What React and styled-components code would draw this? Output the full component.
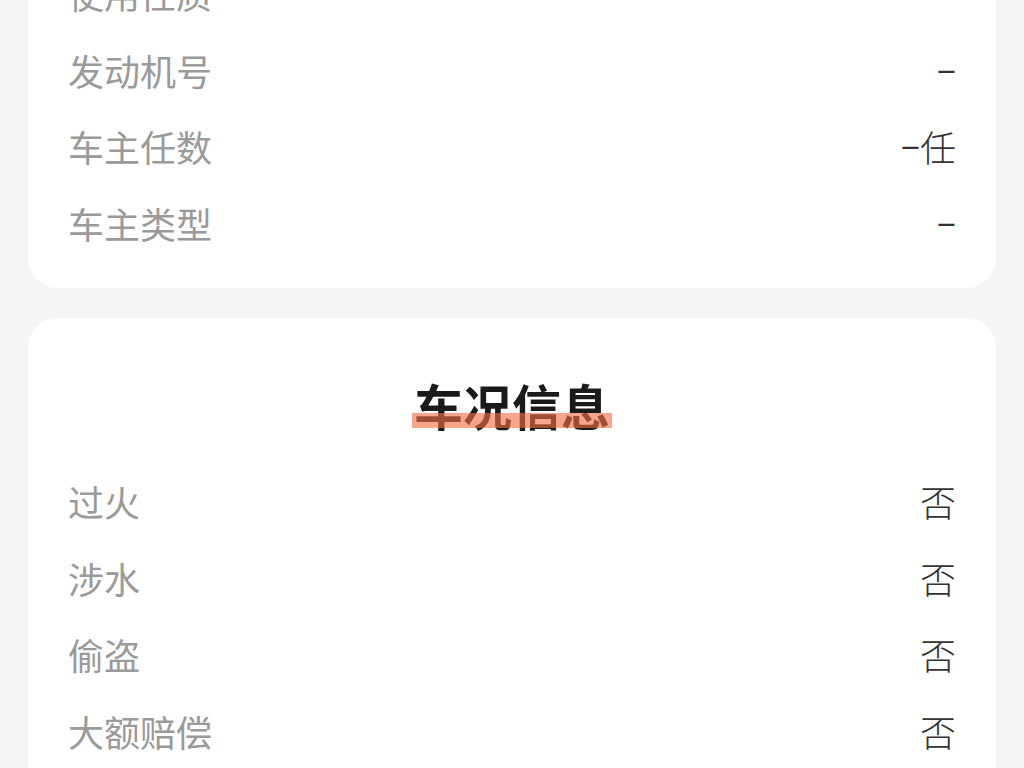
import React from "react";
import styled, { createGlobalStyle } from "styled-components";

const GlobalStyle = createGlobalStyle`
  html, body {
    margin: 0;
    padding: 0;
    background: #f5f5f5;
    font-family: "Noto Sans CJK SC", "Noto Sans", sans-serif;
    overflow: hidden;
  }
`;

const Page = styled.div`
  display: flex;
  flex-direction: column;
  gap: 30px;
  padding: 0 28px;
  margin-top: -77px;
`;

const Card = styled.section`
  background: #ffffff;
  border-radius: 30px;
  padding: ${(p) => (p.$titled ? "57px 40px 27px" : "32px 40px 27px")};
  display: flex;
  flex-direction: column;
`;

const TitleWrap = styled.div`
  display: flex;
  justify-content: center;
  height: 60px;
  align-items: center;
  margin-bottom: 28px;
`;

const Title = styled.h2`
  position: relative;
  margin: 0;
  font-size: 49px;
  line-height: 60px;
  font-weight: 700;
  color: #1a1a1a;

  &::after {
    content: "";
    position: absolute;
    left: -2px;
    right: -2px;
    top: 38px;
    height: 15px;
    background: rgba(242, 110, 70, 0.62);
  }
`;

const Row = styled.div`
  display: flex;
  justify-content: space-between;
  align-items: center;
  height: 76.5px;
  font-size: 36px;
`;

const Label = styled.span`
  color: #9a9a9a;
  font-weight: 400;
`;

const Value = styled.span`
  color: #333333;
  font-weight: 300;
`;

const Dash = styled.span`
  position: relative;
  top: -4px;
  font-weight: 400;
`;

const renderValue = (v) =>
  v.startsWith("–") ? (
    <>
      <Dash>–</Dash>
      {v.slice(1)}
    </>
  ) : (
    v
  );

const basicRows = [
  ["使用性质", "–"],
  ["发动机号", "–"],
  ["车主任数", "–任"],
  ["车主类型", "–"],
];

const conditionRows = [
  ["过火", "否"],
  ["涉水", "否"],
  ["偷盗", "否"],
  ["大额赔偿", "否"],
];

export default function App() {
  return (
    <>
      <GlobalStyle />
      <Page>
        <Card>
          {basicRows.map(([k, v]) => (
            <Row key={k}>
              <Label>{k}</Label>
              <Value>{renderValue(v)}</Value>
            </Row>
          ))}
        </Card>
        <Card $titled>
          <TitleWrap>
            <Title>车况信息</Title>
          </TitleWrap>
          {conditionRows.map(([k, v]) => (
            <Row key={k}>
              <Label>{k}</Label>
              <Value>{renderValue(v)}</Value>
            </Row>
          ))}
        </Card>
      </Page>
    </>
  );
}
